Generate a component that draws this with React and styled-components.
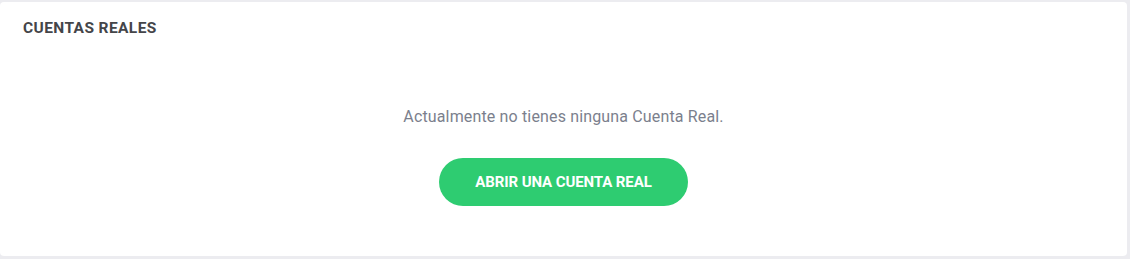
import React from 'react';
import styled, { createGlobalStyle } from 'styled-components';

const GlobalStyle = createGlobalStyle`
  html, body {
    margin: 0;
    padding: 0;
    background: #ececf0;
    font-family: Roboto, "Liberation Sans", Arial, sans-serif;
  }
`;

const Page = styled.div`
  padding: 2px 3px 3px 0;
  height: 259px;
  box-sizing: border-box;
`;

const Card = styled.section`
  height: 100%;
  box-sizing: border-box;
  background: #fff;
  border-radius: 4px;
  display: flex;
  flex-direction: column;
`;

const Title = styled.h2`
  margin: 0;
  padding: 17px 23px 0;
  font-size: 15.5px;
  font-weight: 700;
  line-height: 18px;
  color: #444549;
  letter-spacing: 0.4px;
`;

const Empty = styled.div`
  display: flex;
  flex-direction: column;
  align-items: center;
  padding-top: 70px;
`;

const Message = styled.p`
  margin: 0;
  font-size: 16px;
  line-height: 19px;
  color: #7b7f8d;
  letter-spacing: 0.15px;
`;

const Button = styled.button`
  margin-top: 32px;
  width: 249px;
  height: 48px;
  border: none;
  border-radius: 24px;
  background: #2ecc71;
  color: #fff;
  font-family: inherit;
  font-size: 15px;
  font-weight: 700;
  letter-spacing: -0.1px;
  cursor: pointer;
`;

export default function App() {
  return (
    <>
      <GlobalStyle />
      <Page>
        <Card>
          <Title>CUENTAS REALES</Title>
          <Empty>
            <Message>Actualmente no tienes ninguna Cuenta Real.</Message>
            <Button>ABRIR UNA CUENTA REAL</Button>
          </Empty>
        </Card>
      </Page>
    </>
  );
}
